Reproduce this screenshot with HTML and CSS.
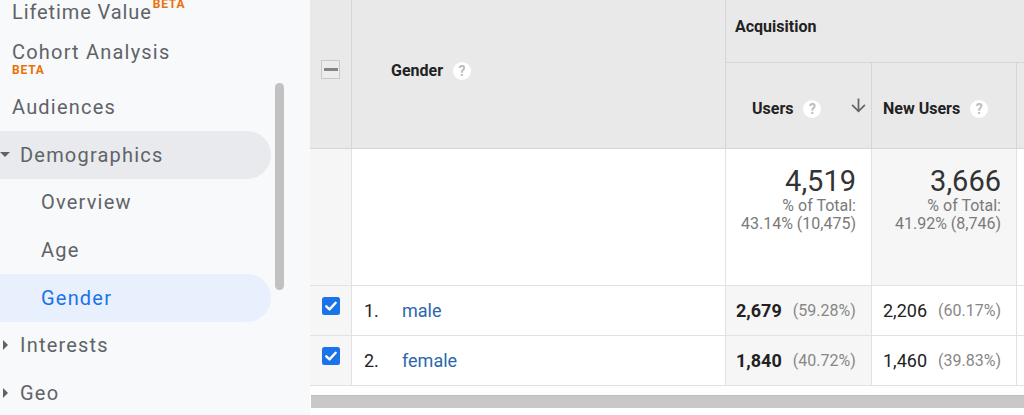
FILE: index.html
```html
<!DOCTYPE html>
<html lang="en">
<head>
<meta charset="utf-8">
<title>Gender report</title>
<link rel="stylesheet" href="styles.css">
</head>
<body>
<div class="page">
  <nav class="sidebar">
    <div class="nav-top"><span class="nav-text">Lifetime Value</span><span class="beta beta-sup">BETA</span></div>
    <div class="nav-cohort"><span class="nav-text">Cohort Analysis</span><span class="beta beta-block">BETA</span></div>
    <div class="nav-row plain">Audiences</div>
    <div class="nav-row open"><span class="caret"><span class="tri-down"></span></span>Demographics</div>
    <div class="nav-row sub">Overview</div>
    <div class="nav-row sub">Age</div>
    <div class="nav-row sub active">Gender</div>
    <div class="nav-row"><span class="caret"><span class="tri-right"></span></span>Interests</div>
    <div class="nav-row"><span class="caret"><span class="tri-right"></span></span>Geo</div>
    <div class="vscroll"></div>
  </nav>
  <main class="report">
    <div class="grid">
      <div class="cell head sel span2"><span class="minus-box"><span class="minus"></span></span></div>
      <div class="cell head dim span2"><span>Gender</span><span class="help">?</span></div>
      <div class="cell head group">Acquisition</div>
      <div class="cell head metric m-users"><span>Users</span><span class="help">?</span>
        <svg class="sort" viewBox="0 0 24 24" width="21" height="21"><path d="M20 12l-1.41-1.41L13 16.17V4h-2v12.17l-5.58-5.59L4 12l8 8 8-8z"/></svg>
      </div>
      <div class="cell head metric m-new"><span>New Users</span><span class="help">?</span></div>
      <div class="cell head metric m-extra"></div>

      <div class="cell body sel"></div>
      <div class="cell body dim"></div>
      <div class="cell body total bg-white">
        <div class="total-big">4,519</div>
        <div class="total-small">% of Total:</div>
        <div class="total-small">43.14% (10,475)</div>
      </div>
      <div class="cell body total bg-shade">
        <div class="total-big">3,666</div>
        <div class="total-small">% of Total:</div>
        <div class="total-small">41.92% (8,746)</div>
      </div>
      <div class="cell body extra"></div>

      <div class="cell body sel row-check"><svg class="check" viewBox="0 0 18 18" width="18" height="18"><rect width="18" height="18" rx="2.5" fill="#1a73e8"/><path d="M4.3 9.3l3.2 3.1 6.2-6.6" fill="none" stroke="#fff" stroke-width="2.4" stroke-linecap="round" stroke-linejoin="round"/></svg></div>
      <div class="cell body dim row-dim"><span class="idx">1.</span><span class="link">male</span></div>
      <div class="cell body value v-users bg-shade"><span class="val bold">2,679</span><span class="pct">(59.28%)</span></div>
      <div class="cell body value v-new"><span class="val">2,206</span><span class="pct">(60.17%)</span></div>
      <div class="cell body extra"></div>

      <div class="cell body sel row-check"><svg class="check" viewBox="0 0 18 18" width="18" height="18"><rect width="18" height="18" rx="2.5" fill="#1a73e8"/><path d="M4.3 9.3l3.2 3.1 6.2-6.6" fill="none" stroke="#fff" stroke-width="2.4" stroke-linecap="round" stroke-linejoin="round"/></svg></div>
      <div class="cell body dim row-dim"><span class="idx">2.</span><span class="link">female</span></div>
      <div class="cell body value v-users bg-shade"><span class="val bold">1,840</span><span class="pct">(40.72%)</span></div>
      <div class="cell body value v-new"><span class="val">1,460</span><span class="pct">(39.83%)</span></div>
      <div class="cell body extra"></div>
    </div>
    <div class="hscroll"></div>
  </main>
</div>
</body>
</html>
```

FILE: styles.css
```css
html, body {
  margin: 0;
  padding: 0;
}
body {
  width: 1024px;
  height: 415px;
  overflow: hidden;
  background: #ffffff;
  font-family: Roboto, "Liberation Sans", Arial, sans-serif;
}
.page {
  display: flex;
  width: 1024px;
  height: 415px;
}

/* ---------- sidebar ---------- */
.sidebar {
  position: relative;
  flex: 0 0 310px;
  width: 310px;
  height: 415px;
  background: #f8f9fa;
  overflow: hidden;
  color: #5f6368;
  font-size: 20px;
  letter-spacing: 1.2px;
}
.nav-top {
  height: 40px;
  padding-left: 12px;
  line-height: 24px;
  white-space: nowrap;
  letter-spacing: 0.9px;
}
.nav-cohort {
  height: 43.33px;
  padding-left: 12px;
  display: flex;
  flex-direction: column;
  line-height: 24px;
}
.beta {
  color: #e8710a;
  font-weight: 700;
  font-size: 12px;
  letter-spacing: 0.8px;
}
.beta-sup {
  line-height: 0;
  vertical-align: 11px;
  margin-left: 1px;
}
.beta-block {
  line-height: 12px;
}
.nav-row {
  height: 47.667px;
  display: flex;
  align-items: center;
  width: 271px;
  box-sizing: border-box;
  white-space: nowrap;
}
.nav-row.plain {
  padding-left: 12px;
}
.nav-row.sub {
  padding-left: 41px;
}
.nav-row.open {
  background: #e8eaed;
  border-radius: 0 24px 24px 0;
}
.nav-row.active {
  background: #e8f0fe;
  color: #1a73e8;
  border-radius: 0 24px 24px 0;
}
.caret {
  flex: 0 0 10px;
  width: 10px;
  height: 10px;
  margin-right: 10px;
  display: flex;
  align-items: center;
  justify-content: center;
}
.tri-down {
  width: 0;
  height: 0;
  border-left: 5px solid transparent;
  border-right: 5px solid transparent;
  border-top: 5px solid #5f6368;
}
.tri-right {
  width: 0;
  height: 0;
  border-top: 5px solid transparent;
  border-bottom: 5px solid transparent;
  border-left: 5px solid #5f6368;
}
.vscroll {
  position: absolute;
  left: 275px;
  top: 83px;
  width: 9px;
  height: 207px;
  border-radius: 5px;
  background: #c1c1c1;
}

/* ---------- report table ---------- */
.report {
  flex: 1 1 auto;
  min-width: 0;
  overflow: hidden;
  background: #ffffff;
}
.grid {
  display: grid;
  grid-template-columns: 42px 374px 146px 145px 200px;
  grid-template-rows: 63px 86px 137px 50px 50px;
  width: 907px;
  color: #222222;
}
.cell {
  box-sizing: border-box;
  border-right: 1px solid #e2e2e2;
  border-bottom: 1px solid #e2e2e2;
  min-width: 0;
}
.head {
  background: #e9e9e9;
  border-color: #d6d6d6;
  font-weight: 700;
  font-size: 16px;
  line-height: 20px;
}
.span2 {
  grid-row: span 2;
}
.head.sel {
  display: flex;
  justify-content: center;
  align-items: flex-start;
  padding-top: 60px;
}
.minus-box {
  width: 19px;
  height: 19px;
  box-sizing: border-box;
  border: 1px solid #c9c9c9;
  background: #ececec;
  display: flex;
  align-items: center;
  justify-content: center;
}
.minus {
  width: 14px;
  height: 3px;
  background: #858585;
}
.head.dim {
  display: flex;
  align-items: flex-start;
  padding: 61px 0 0 39px;
}
.help {
  flex: 0 0 18px;
  width: 18px;
  height: 18px;
  margin: 1px 0 0 10px;
  border-radius: 50%;
  background: #ffffff;
  color: #bdbdbd;
  font-size: 14px;
  font-weight: 700;
  line-height: 18px;
  text-align: center;
  letter-spacing: 0;
}
.head.group {
  grid-column: span 3;
  padding: 17px 9px 0;
}
.head.metric {
  display: flex;
  align-items: flex-start;
  padding-top: 36px;
}
.m-users {
  padding-left: 26px;
  padding-right: 2px;
}
.m-new {
  padding-left: 11px;
}
.sort {
  margin-left: auto;
  margin-top: -4px;
  fill: #666666;
}

.body {
  background: #ffffff;
}
.body.sel {
  background: #f6f6f6;
}
.bg-white {
  background: #ffffff;
}
.bg-shade {
  background: #f6f6f6;
}
.total {
  text-align: right;
  padding: 16px 15px 0 0;
}
.total-big {
  font-size: 29px;
  line-height: 32px;
  color: #333333;
}
.total-small {
  font-size: 16px;
  line-height: 18px;
  color: #7a7a7a;
}
.row-check {
  display: flex;
  justify-content: center;
  align-items: flex-start;
  padding-top: 11px;
}
.check {
  display: block;
}
.row-dim {
  display: flex;
  align-items: center;
  padding-left: 12px;
  font-size: 18px;
  line-height: 24px;
}
.idx {
  width: 38px;
  color: #222222;
}
.link {
  color: #2a67ad;
}
.value {
  display: flex;
  align-items: center;
  white-space: nowrap;
}
.v-users {
  padding-left: 10px;
}
.v-new {
  padding-left: 11px;
}
.val {
  font-size: 18px;
  line-height: 24px;
  color: #222222;
}
.val.bold {
  font-weight: 700;
}
.pct {
  margin-left: 11px;
  font-size: 16px;
  line-height: 24px;
  color: #878787;
}

.hscroll {
  height: 13px;
  margin: 9px 0 0 1px;
  background: #c8c8c8;
  border-top: 1px solid #bdbdbd;
  box-sizing: border-box;
}
```
